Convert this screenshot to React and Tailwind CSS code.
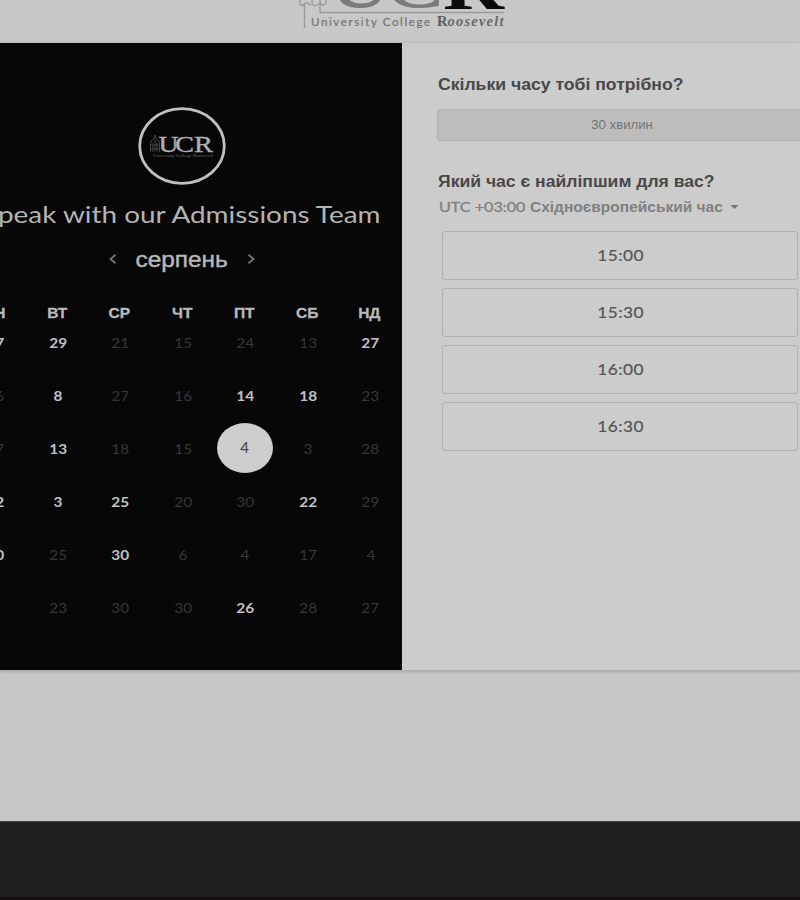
import React from "react";

const WEEKDAYS = ["ПН", "ВТ", "СР", "ЧТ", "ПТ", "СБ", "НД"];

// Positive entries are open days, negative ones are unavailable.
const WEEKS = [
  [27, 29, -21, -15, -24, -13, 27],
  [-26, 8, -27, -16, 14, 18, -23],
  [-17, 13, -18, -15, 4, -3, -28],
  [22, 3, 25, -20, -30, 22, -29],
  [20, -25, 30, -6, -4, -17, -4],
  [-5, -23, -30, -30, 26, -28, -27],
];

const TIMES = ["15:00", "15:30", "16:00", "16:30"];

function HeaderLogo() {
  return (
    <svg className="ml-[296px] block" width="220" height="43" viewBox="0 0 220 43">
      <g fill="none" stroke="#9a9a9a" strokeWidth="1.4">
        <path d="M8.500 28V5M4 0V4Q6 7 8.500 4Q11 1 13 4L15 5M16 0V3Q18 7 21 5L24 3V12.500H208" />
        <path d="M24 0V3Q28 7 30 3V0" />
      </g>
      <g fontFamily="'Liberation Serif', serif" fontSize="65">
        <text x="34" y="7" fill="#7b7b7b" stroke="#7b7b7b" textLength="60" lengthAdjust="spacingAndGlyphs">U</text>
        <text x="90" y="7" fill="#7b7b7b" stroke="#7b7b7b" textLength="57" lengthAdjust="spacingAndGlyphs">C</text>
        <text x="147" y="8.500" fill="#0c0c0c" fontWeight="700" textLength="61" lengthAdjust="spacingAndGlyphs">R</text>
      </g>
      <text x="15" y="25.500" fontFamily="Lato, sans-serif" fontSize="11.500" fill="#757575" stroke="#757575" strokeWidth=".2" textLength="119">University College</text>
      <text x="141" y="25.500" fontFamily="'Liberation Serif', serif" fontSize="14.500" fontWeight="700" fill="#5c5c5c" textLength="10.500" lengthAdjust="spacingAndGlyphs">R</text>
      <text x="151.500" y="25.500" fontFamily="'Liberation Serif', serif" fontSize="14.500" fontWeight="700" fontStyle="italic" fill="#6a6a6a" textLength="56">oosevelt</text>
    </svg>
  );
}

function Emblem() {
  return (
    <svg className="block" width="90" height="80" viewBox="0 0 90 80">
      <ellipse cx="45" cy="40" rx="42.300" ry="37.300" fill="none" stroke="#c0c0c0" strokeWidth="2.800" />
      <g stroke="#424242" strokeWidth="1" fill="none">
        <path d="M13.500 46V37L15 34L17 33L18 29L19 33L21 34L22.500 37V46M16 46V37M18 45V34M20 46V37M13 39H23M14 43H22" />
      </g>
      <g fontFamily="'Liberation Serif', serif" fontSize="24" fill="#b0b0b0" stroke="#b0b0b0" strokeWidth=".4">
        <text x="21.500" y="45.500" textLength="20" lengthAdjust="spacingAndGlyphs">U</text>
        <text x="38" y="45.500" textLength="19" lengthAdjust="spacingAndGlyphs">C</text>
        <text x="57" y="45.500" textLength="19" lengthAdjust="spacingAndGlyphs">R</text>
      </g>
      <text x="16" y="51" fontFamily="'Liberation Serif', serif" fontSize="5" fill="#666666" textLength="60" lengthAdjust="spacingAndGlyphs">University College Roosevelt</text>
    </svg>
  );
}

function Chevron({ flip }) {
  return (
    <svg className={flip ? "rotate-180" : ""} width="8" height="10" viewBox="0 0 8 10" fill="none" stroke="#747474" strokeWidth="1.800">
      <path d="M6.500 .8L1.500 5L6.500 9.200" />
    </svg>
  );
}

function Day({ value, selected }) {
  if (selected) {
    return (
      <div className="flex h-[53px] items-center justify-center">
        <div className="flex h-[50px] w-[56px] -translate-y-[1px] items-center justify-center rounded-[50%] bg-[#cecece] font-[Lato,sans-serif] text-[15px] font-medium text-[#4a4a4a]">
          {value}
        </div>
      </div>
    );
  }
  const tone = value > 0 ? "font-bold text-[#c2c2c2]" : "text-[#363636]";
  return (
    <div className="flex h-[53px] items-center justify-center pl-[2px] font-[Lato,sans-serif] text-[14px]">
      <span className={"scale-x-[1.1] tracking-[0.2px] " + tone}>{Math.abs(value)}</span>
    </div>
  );
}

function Calendar() {
  return (
    <section className="flex w-[402px] shrink-0 justify-end overflow-hidden bg-[#070707] pr-px">
      <div className="flex w-[438px] shrink-0 flex-col pt-[63px]">
        <div className="flex justify-center">
          <Emblem />
        </div>
        <h1 className="mt-[12px] flex h-8 items-center justify-center whitespace-nowrap font-[Lato,sans-serif] text-[23px] text-[#b4b4b4]">
          <span className="scale-x-[1.213]">Speak with our Admissions Team</span>
        </h1>
        <div className="mt-[13px] flex h-8 items-center justify-center gap-[23px] font-['Liberation_Sans',sans-serif] text-[22px] text-[#b8b8b8]">
          <Chevron />
          <span className="scale-x-[1.11] [-webkit-text-stroke:0.4px_#b8b8b8]">серпень</span>
          <Chevron flip />
        </div>
        <div className="mt-[28px] grid h-[20px] grid-cols-7 items-center text-center font-['Liberation_Sans',sans-serif] text-[14px] font-bold leading-5 text-[#b9b9b9]">
          {WEEKDAYS.map((d) => (
            <span key={d} className="scale-x-[1.11] [-webkit-text-stroke:0.3px_#b9b9b9]">{d}</span>
          ))}
        </div>
        <div className="-mt-[7px] grid grid-cols-7">
          {WEEKS.map((week, r) =>
            week.map((v, c) => <Day key={r + "-" + c} value={v} selected={r === 2 && c === 4} />)
          )}
        </div>
      </div>
    </section>
  );
}

function Booking() {
  return (
    <section className="min-w-0 flex-1 overflow-hidden bg-[#cccccc] pl-[35px] pt-[30px] font-['Liberation_Sans',sans-serif]">
      <h2 className="ml-[0.5px] h-6 w-max origin-left scale-x-[1.1] whitespace-nowrap text-[16px] font-bold leading-6 text-[#484848]">
        Скільки часу тобі потрібно?
      </h2>
      <div className="mt-[12px] flex h-[32px] w-[371px] items-center justify-center rounded-[3px] border border-[#afafaf] bg-[#bdbdbd] text-[12px] text-[#747474]">
        <span className="scale-x-[1.1]">30 хвилин</span>
      </div>
      <h2 className="ml-[0.5px] mt-[29px] h-6 w-max origin-left scale-x-[1.098] whitespace-nowrap text-[16px] font-bold leading-6 text-[#484848]">
        Який час є найліпшим для вас?
      </h2>
      <div className="mt-[1px] flex h-6 items-center pl-[2px] text-[14px] leading-6 text-[#808080]">
        <span className="w-[91px] whitespace-nowrap font-[Lato,sans-serif] text-[14px]">
          <span className="inline-block origin-left scale-x-[1.15] [-webkit-text-stroke:0.3px_#808080]">UTC +03:00</span>
        </span>
        <span className="w-[200px] whitespace-nowrap font-bold">
          <span className="inline-block origin-left scale-x-[1.107]">Східноєвропейський час</span>
        </span>
        <svg width="9" height="4" viewBox="0 0 8 4" fill="#777777">
          <path d="M0 0H8L4 4Z" />
        </svg>
      </div>
      <div className="ml-[5px] mt-[12px] flex w-[356px] flex-col gap-2">
        {TIMES.map((t) => (
          <button
            key={t}
            className="flex h-[49px] items-center justify-center rounded-[3px] border border-[#b0b0b0] pb-[2px] pl-px font-[Lato,sans-serif] text-[16px] text-[#555555]"
          >
            <span className="scale-x-[1.08] tracking-[0.4px] [-webkit-text-stroke:0.2px_#555555]">{t}</span>
          </button>
        ))}
      </div>
    </section>
  );
}

export default function App() {
  return (
    <div className="flex h-[900px] w-[800px] flex-col overflow-hidden bg-[#c7c7c7]">
      <header className="h-[43px] shrink-0 bg-[#c8c8c8]">
        <HeaderLogo />
      </header>
      <main className="flex h-[627px] shrink-0 shadow-[0_1px_4px_rgba(0,0,0,0.22)]">
        <Calendar />
        <Booking />
      </main>
      <footer className="mt-[151px] h-[79px] shrink-0 border-t border-[#444444] border-b-[3px] border-b-[#160f13] bg-[#1e1e1e]" />
    </div>
  );
}
